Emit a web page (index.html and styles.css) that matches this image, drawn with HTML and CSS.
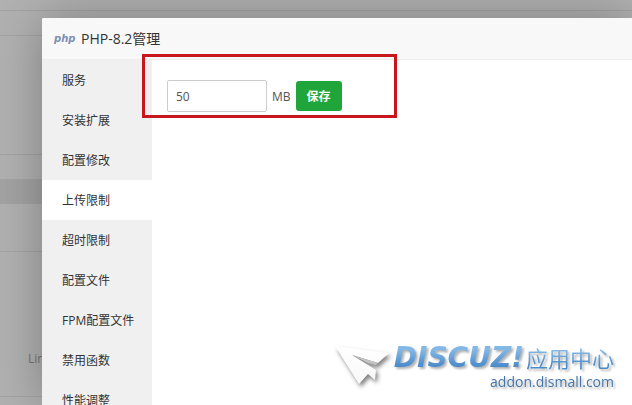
FILE: index.html
```html
<!DOCTYPE html>
<html lang="zh-CN">
<head>
<meta charset="utf-8">
<meta name="viewport" content="width=device-width, initial-scale=1">
<title>PHP-8.2管理</title>
<link rel="stylesheet" href="styles.css">
</head>
<body>
<div class="page">
  <div class="row row-top"></div>
  <div class="row row-head"></div>
  <div class="row row-tall"></div>
  <div class="row row-short"></div>
  <div class="row row-band"></div>
  <div class="row row-mid"></div>
  <div class="row row-text">Linux</div>
</div>
<main class="dialog">
  <header class="dialog-head">
    <svg class="php" viewBox="0 0 20 14" aria-hidden="true"><text x="0" y="10">php</text></svg>
    <h1>PHP-8.2管理</h1>
  </header>
  <div class="dialog-body">
    <nav class="menu">
      <a href="#">服务</a>
      <a href="#">安装扩展</a>
      <a href="#">配置修改</a>
      <a href="#" class="active" aria-current="page">上传限制</a>
      <a href="#">超时限制</a>
      <a href="#">配置文件</a>
      <a href="#">FPM配置文件</a>
      <a href="#">禁用函数</a>
      <a href="#">性能调整</a>
    </nav>
    <form class="panel">
      <input id="limit" type="text" value="50">
      <label for="limit">MB</label>
      <button type="button">保存</button>
      <span class="highlight"></span>
    </form>
  </div>
</main>
<div class="brand">
  <svg class="plane" viewBox="0 0 60 46" aria-hidden="true">
    <defs>
      <linearGradient id="paper" x1="0" y1="0" x2="0" y2="1">
        <stop offset="0" stop-color="#fff"/><stop offset="1" stop-color="#f8f8f8"/>
      </linearGradient>
    </defs>
    <path fill="url(#paper)" d="M1 2L55 9L44 19L18 11L42 26L41 36L34 30L25 40Z"/>
    <path fill="#c4c4c4" d="M18 11L44 19L42 21L34 19Z"/>
  </svg>
  <div class="brand-text">
    <div class="brand-name"><span class="latin">DISCUZ!</span><span class="han">应用中心</span></div>
    <div class="brand-url">addon.dismall.com</div>
  </div>
</div>
</body>
</html>
```
FILE: styles.css
```css
* {
  box-sizing: border-box;
}

body {
  margin: 0;
  height: 100vh;
  overflow: hidden;
  position: relative;
  font: 12px/20px "Open Sans", "Noto Sans CJK SC", sans-serif;
  color: #333;
}

.page {
  height: 100%;
  background: #b1b1b1;
}

.row {
  border-bottom: 1px solid #a3a3a3;
}

.row-top { height: 11px; }
.row-head { height: 25px; }
.row-tall { height: 119px; }
.row-short { height: 25px; }
.row-band { height: 24px; background: #a3a3a3; }
.row-mid { height: 48px; }

.row-text {
  height: 145px;
  padding: 97px 0 0 28px;
  color: #777;
}

.dialog {
  position: absolute;
  inset: 18px 0 0 42px;
  display: flex;
  flex-direction: column;
  background: #fff;
  border-radius: 2px 0 0 0;
  box-shadow: 1px 1px 50px rgba(0, 0, 0, 0.3);
}

.dialog-head {
  display: flex;
  align-items: center;
  gap: 7px;
  height: 42px;
  flex: none;
  padding-left: 12px;
  background: #f8f8f8;
  border-bottom: 1px solid #eee;
  border-radius: 2px 0 0 0;
}

.dialog-head h1 {
  margin: 0;
  font-size: 14px;
  font-weight: 400;
}

.php {
  width: 20px;
  height: 14px;
  overflow: visible;
  fill: #7c90b3;
  font: italic 700 10px "DejaVu Sans", sans-serif;
}

.dialog-body {
  display: flex;
  flex: 1;
  min-height: 0;
}

.menu {
  width: 110px;
  flex: none;
  overflow: hidden;
  background: #f0f0f0;
}

.menu a {
  display: block;
  padding: 2px 0 0 20px;
  line-height: 38px;
  color: #333;
  text-decoration: none;
}

.menu .active {
  background: #fff;
}

.panel {
  position: relative;
  flex: 1;
  display: flex;
  align-items: center;
  align-self: flex-start;
  padding: 20px 15px;
  color: #555;
}

.panel input {
  width: 100px;
  height: 32px;
  padding: 0 8px;
  border: 1px solid #ccc;
  border-radius: 2px;
  font: inherit;
  color: #555;
}

.panel label {
  margin: 0 5px;
  padding-top: 2px;
}

.panel button {
  width: 46px;
  height: 30px;
  padding: 2px 0 0;
  border: 0;
  border-radius: 3px;
  background: #20a53a;
  color: #fff;
  font: inherit;
  font-weight: 700;
}

.highlight {
  position: absolute;
  left: -10px;
  top: -6px;
  width: 255px;
  height: 64px;
  border: 3px solid #c8161d;
  pointer-events: none;
}

.brand {
  position: absolute;
  right: 18px;
  bottom: 15px;
  display: flex;
  align-items: flex-start;
}

.plane {
  width: 60px;
  height: 46px;
  overflow: visible;
  filter: drop-shadow(2px 3px 2px rgba(0, 0, 0, 0.5));
}

.brand-text {
  text-align: right;
  filter: drop-shadow(2px 2px 1px rgba(0, 0, 0, 0.3));
}

.brand-name {
  display: flex;
  align-items: center;
  gap: 2px;
  height: 28px;
}

.latin,
.han {
  background: linear-gradient(#83b8e6 20%, #4a8bcb 80%);
  background-clip: text;
  color: transparent;
}

.latin {
  font: italic 700 28px/28px "DejaVu Sans", sans-serif;
}

.han {
  font-size: 22px;
  line-height: 24px;
}

.brand-url {
  padding-top: 2px;
  font-size: 14px;
  line-height: 16px;
  color: #4575a8;
}
```
